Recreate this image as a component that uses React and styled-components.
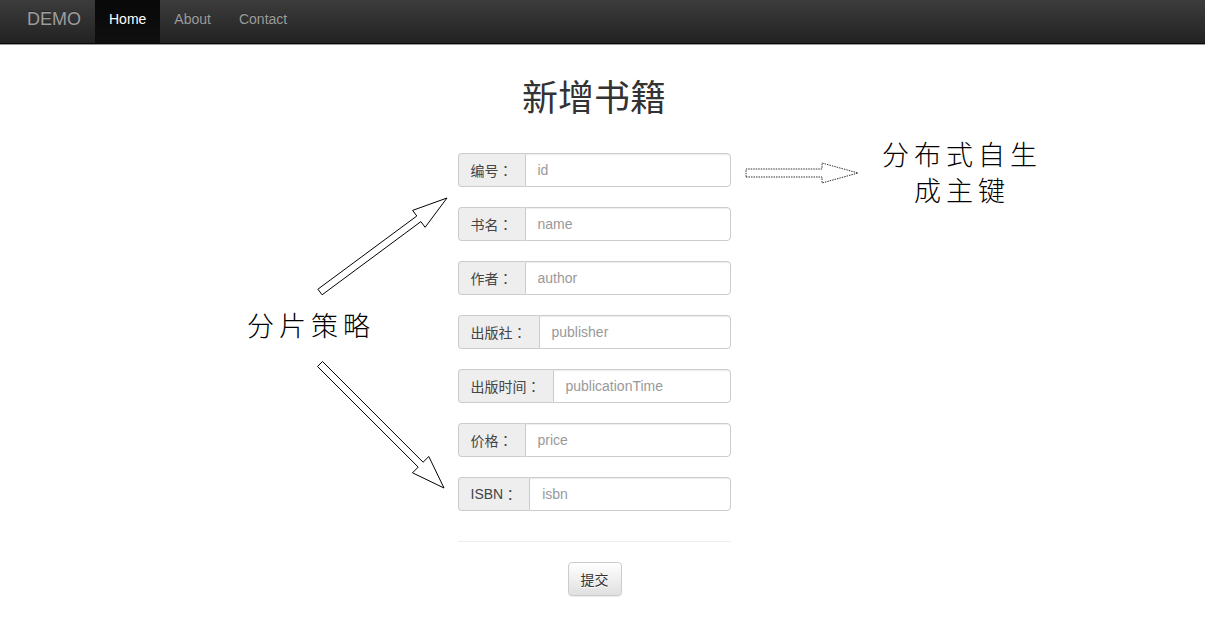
import React from "react"
import styled, { createGlobalStyle } from "styled-components"

const GlobalStyle = createGlobalStyle`
  html, body {
    margin: 0;
    padding: 0;
    background: #fff;
  }
  body {
    font-family: "Liberation Sans", "Noto Sans CJK SC", Arial, sans-serif;
    font-size: 14px;
    color: #333;
  }
`

const fields = [
  { label: "编号", placeholder: "id" },
  { label: "书名", placeholder: "name" },
  { label: "作者", placeholder: "author" },
  { label: "出版社", placeholder: "publisher" },
  { label: "出版时间", placeholder: "publicationTime" },
  { label: "价格", placeholder: "price" },
  { label: "ISBN", placeholder: "isbn" },
]

// polygon points for an outlined block arrow from tail to tip
const arrowPoints = (x1, y1, x2, y2, shaft, headLen, headW) => {
  const dx = x2 - x1
  const dy = y2 - y1
  const len = Math.hypot(dx, dy)
  const ux = dx / len
  const uy = dy / len
  const px = -uy
  const py = ux
  const bx = x2 - ux * headLen
  const by = y2 - uy * headLen
  const s = shaft / 2
  const h = headW / 2
  const pts = [
    [x1 + px * s, y1 + py * s],
    [bx + px * s, by + py * s],
    [bx + px * h, by + py * h],
    [x2, y2],
    [bx - px * h, by - py * h],
    [bx - px * s, by - py * s],
    [x1 - px * s, y1 - py * s],
  ]
  return pts.map((p) => p.map((v) => v.toFixed(1)).join(",")).join(" ")
}

const App = () => {
  return (
    <Page>
      <GlobalStyle />
      <Navbar>
        <Brand>DEMO</Brand>
        <NavList>
          <NavItem $active>Home</NavItem>
          <NavItem>About</NavItem>
          <NavItem>Contact</NavItem>
        </NavList>
      </Navbar>

      <Main>
        <Title>新增书籍</Title>
        <Form>
          {fields.map((f) => (
            <InputGroup key={f.placeholder}>
              <Addon>
                {f.label}
                <Colon>：</Colon>
              </Addon>
              <Input placeholder={f.placeholder} />
            </InputGroup>
          ))}
          <Divider />
          <Actions>
            <Button type="button">提交</Button>
          </Actions>
        </Form>
      </Main>

      {/* 标注层 */}
      <Overlay width="1207" height="637" viewBox="0 0 1207 637">
        <polygon
          points={arrowPoints(320, 292, 447, 198, 7, 35, 21)}
          fill="#fff"
          stroke="#000"
          strokeWidth="1"
        />
        <polygon
          points={arrowPoints(320, 364, 444, 488, 7, 33, 23)}
          fill="#fff"
          stroke="#000"
          strokeWidth="1"
        />
        <polygon
          points={arrowPoints(746, 173, 858, 173, 8, 36, 20)}
          fill="#fff"
          stroke="#333"
          strokeWidth="1"
          strokeDasharray="1.5 1"
        />
      </Overlay>
      <Note $left={882} $top={136} $width={160}>
        分布式自生
        <br />
        成主键
      </Note>
      <Note $left={245} $top={307} $width={132}>
        分片策略
      </Note>
    </Page>
  )
}

const Page = styled.div`
  position: relative;
  width: 1207px;
  min-height: 637px;
  overflow: hidden;
`

const Navbar = styled.nav`
  display: flex;
  align-items: stretch;
  height: 43px;
  margin-right: 2px;
  padding-left: 12px;
  background: linear-gradient(to bottom, #3c3c3c 0%, #222 100%);
  border-bottom: 1px solid #080808;
  box-shadow: 0 1px 0 #999;
`

const Brand = styled.a`
  display: flex;
  align-items: center;
  padding: 0 15px 5px;
  font-size: 18px;
  color: #9d9d9d;
  text-shadow: 0 -1px 0 rgba(0, 0, 0, 0.25);
`

const NavList = styled.ul`
  display: flex;
  margin: 0 0 0 -1px;
  padding: 0;
  list-style: none;
`

const NavItem = styled.li`
  display: flex;
  align-items: center;
  padding: 0 14px 6px;
  font-size: 14px;
  color: ${(p) => (p.$active ? "#fff" : "#9d9d9d")};
  background: ${(p) =>
    p.$active ? "linear-gradient(to bottom, #080808 0%, #0f0f0f 100%)" : "transparent"};
  text-shadow: 0 -1px 0 rgba(0, 0, 0, 0.25);
`

const Main = styled.main`
  display: flex;
  flex-direction: column;
  align-items: center;
  padding-right: 19px;
`

const Title = styled.h1`
  margin: 31px 0 38px;
  font-family: "Noto Sans CJK SC", sans-serif;
  font-size: 36px;
  font-weight: 400;
  line-height: 40px;
  color: #333;
`

const Form = styled.form`
  display: flex;
  flex-direction: column;
  width: 273px;
`

const InputGroup = styled.div`
  display: flex;
  height: 34px;
  margin-bottom: 20px;
  box-sizing: border-box;
`

const Addon = styled.span`
  display: flex;
  align-items: center;
  padding: 0 12px;
  background: #eee;
  border: 1px solid #ccc;
  border-right: 0;
  border-radius: 4px 0 0 4px;
  font-family: "Liberation Sans", "Noto Sans CJK SC", sans-serif;
  font-size: 14px;
  color: #444;
  white-space: nowrap;
`

const Colon = styled.span`
  display: inline-block;
  width: 14px;
  text-align: center;
  font-family: "Noto Sans CJK TC", sans-serif;
`

const Input = styled.input`
  flex: 1;
  min-width: 0;
  padding: 0 12px;
  border: 1px solid #ccc;
  border-radius: 0 4px 4px 0;
  font-family: "Liberation Sans", sans-serif;
  font-size: 14px;
  color: #555;
  box-shadow: inset 0 1px 1px rgba(0, 0, 0, 0.075);
  outline: none;

  &::placeholder {
    color: #999;
  }
`

const Divider = styled.hr`
  width: 100%;
  margin: 10px 0 20px;
  border: 0;
  border-top: 1px solid #eee;
`

const Actions = styled.div`
  display: flex;
  justify-content: center;
  padding-left: 1px;
`

const Button = styled.button`
  height: 34px;
  padding: 0 12px;
  font-family: "Noto Sans CJK SC", sans-serif;
  font-size: 14px;
  color: #333;
  background: linear-gradient(to bottom, #fff 0%, #e0e0e0 100%);
  border: 1px solid #ccc;
  border-radius: 4px;
  box-shadow: inset 0 1px 0 rgba(255, 255, 255, 0.15), 0 1px 1px rgba(0, 0, 0, 0.075);
  text-shadow: 0 1px 0 #fff;
`

const Overlay = styled.svg`
  position: absolute;
  top: 0;
  left: 0;
  pointer-events: none;
`

const Note = styled.div`
  position: absolute;
  left: ${(p) => p.$left}px;
  top: ${(p) => p.$top}px;
  width: ${(p) => p.$width}px;
  font-family: "Noto Sans CJK SC", sans-serif;
  font-weight: 300;
  font-size: 27px;
  line-height: 36px;
  letter-spacing: 5px;
  text-align: center;
  color: #000;
`

export default App
